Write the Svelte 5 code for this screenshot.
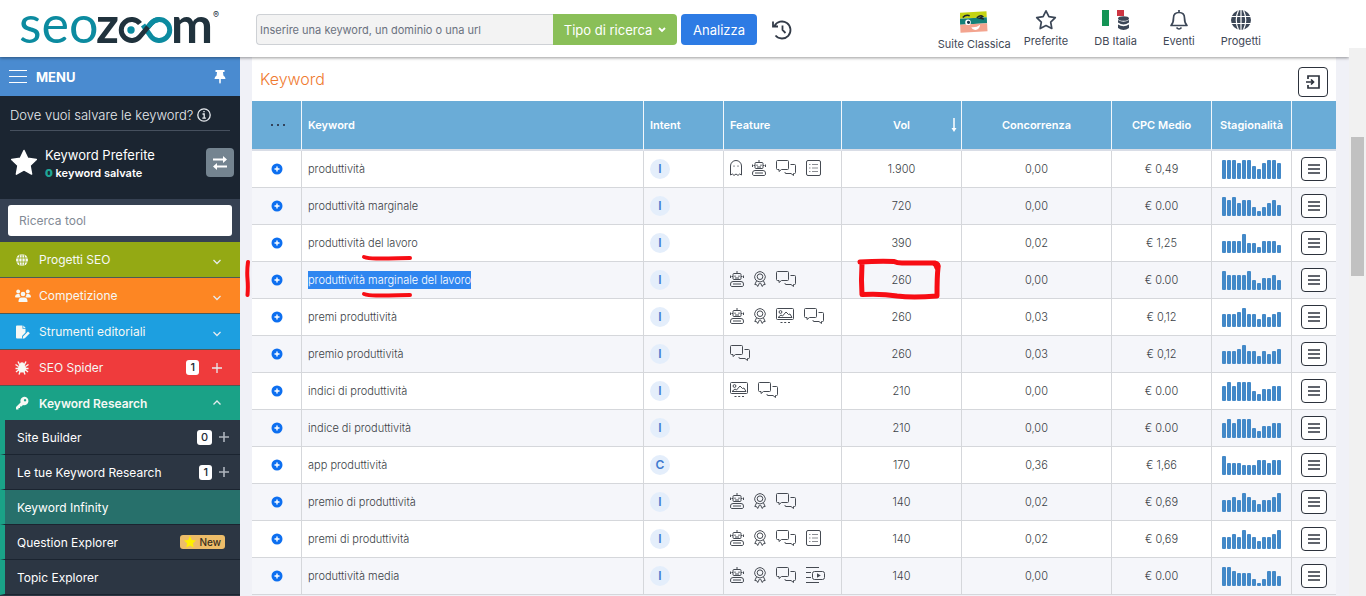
<script lang="ts">
  type Row = {
    keyword: string;
    intent: string;
    features: string[];
    vol: string;
    competition: string;
    cpc: string;
    trend: number[];
    mark?: string;
  };

  let query = $state('');
  let toolQuery = $state('');

  const sections = [
    { name: 'Progetti SEO', icon: 'globe', tone: 'olive' },
    { name: 'Competizione', icon: 'users', tone: 'orange' },
    { name: 'Strumenti editoriali', icon: 'edit', tone: 'blue' },
    { name: 'SEO Spider', icon: 'spider', tone: 'red', count: 1 },
    { name: 'Keyword Research', icon: 'key', tone: 'green', open: true }
  ];

  const tools = [
    { name: 'Site Builder', count: 0 },
    { name: 'Le tue Keyword Research', count: 1 },
    { name: 'Keyword Infinity', active: true },
    { name: 'Question Explorer', isNew: true },
    { name: 'Topic Explorer' }
  ];

  const premi = [13, 13, 13, 15, 19, 13, 13, 8, 13, 10, 13, 15];
  const indici = [15, 19, 15, 19, 19, 19, 10, 7, 12, 12, 15, 15];
  const premioDi = [12, 12, 15, 12, 19, 15, 12, 8, 12, 12, 15, 19];

  const rows: Row[] = [
    { keyword: 'produttività', intent: 'I', features: ['ghost', 'robot', 'chat', 'list'], vol: '1.900', competition: '0,00', cpc: '€ 0,49', trend: [19, 19, 19, 16, 19, 19, 13, 10, 16, 19, 19, 16] },
    { keyword: 'produttività marginale', intent: 'I', features: [], vol: '720', competition: '0,00', cpc: '€ 0.00', trend: [19, 16, 19, 13, 16, 16, 9, 5, 9, 13, 16, 11] },
    { keyword: 'produttività del lavoro', intent: 'I', features: [], vol: '390', competition: '0,02', cpc: '€ 1,25', trend: [12, 12, 12, 12, 19, 10, 10, 6, 12, 12, 12, 8], mark: 'line' },
    { keyword: 'produttività marginale del lavoro', intent: 'I', features: ['robot', 'award', 'chat'], vol: '260', competition: '0,00', cpc: '€ 0.00', trend: [19, 15, 15, 15, 15, 19, 10, 7, 12, 12, 15, 10], mark: 'full' },
    { keyword: 'premi produttività', intent: 'I', features: ['robot', 'award', 'image', 'chat'], vol: '260', competition: '0,03', cpc: '€ 0,12', trend: premi },
    { keyword: 'premio produttività', intent: 'I', features: ['chat'], vol: '260', competition: '0,03', cpc: '€ 0,12', trend: premi },
    { keyword: 'indici di produttività', intent: 'I', features: ['image', 'chat'], vol: '210', competition: '0,00', cpc: '€ 0.00', trend: indici },
    { keyword: 'indice di produttività', intent: 'I', features: [], vol: '210', competition: '0,00', cpc: '€ 0.00', trend: indici },
    { keyword: 'app produttività', intent: 'C', features: [], vol: '170', competition: '0,36', cpc: '€ 1,66', trend: [19, 12, 12, 12, 10, 10, 10, 15, 15, 12, 15, 15] },
    { keyword: 'premio di produttività', intent: 'I', features: ['robot', 'award', 'chat'], vol: '140', competition: '0,02', cpc: '€ 0,69', trend: premioDi },
    { keyword: 'premi di produttività', intent: 'I', features: ['robot', 'award', 'chat', 'list'], vol: '140', competition: '0,02', cpc: '€ 0,69', trend: premioDi },
    { keyword: 'produttività media', intent: 'I', features: ['robot', 'award', 'chat', 'video'], vol: '140', competition: '0,00', cpc: '€ 0.00', trend: [19, 19, 15, 13, 13, 13, 7, 3, 7, 15, 15, 10] }
  ];
</script>

{#snippet feature(name: string)}
  {#if name === 'ghost'}
    <svg class="feature" width="12" height="16" viewBox="0 0 12 16">
      <path d="M.5 15V6a5.500 5.500 0 0 1 11 0v9l-1.800-1L8 15.400l-2-1.400-2 1.400L2.300 14z" />
      <path d="M4 5.500v1.200M8 5.500v1.200" />
    </svg>
  {:else if name === 'robot'}
    <svg class="feature" width="14" height="16" viewBox="0 0 14 16">
      <path d="M7 0v2.500M4 2.500h6q1 0 1 1v4q0 1-1 1H4q-1 0-1-1v-4q0-1 1-1zM.5 4.500v2.500M13.500 4.500v2.500M1.500 5.500H3M11 5.500h1.500M5 4.500v1.500M9 4.500v1.500M5 7h4" />
      <path d="M3 10.500h8q2.500 0 2.500 2.500 0 2.500-1 2.500h-11q-1 0-1-2.500 0-2.500 2.500-2.500zM3 13h8" />
    </svg>
  {:else if name === 'award'}
    <svg class="feature" width="12" height="16" viewBox="0 0 12 16">
      <path d="M6 .6l1.800.5 1.800 1 1 1.700.8 1.900-.6 1.900-1 1.800-1.900 1L6 11l-2-.6-1.900-1L1 7.600.6 5.700l.7-1.900 1-1.700 1.800-1z" />
      <circle cx="6" cy="5.700" r="2.800" />
      <path d="M2.500 10L.8 13.500l1.900.2 1 1.800L5.500 12M9.500 10l1.700 3.500-1.900.2-1 1.800L6.500 12" />
    </svg>
  {:else if name === 'chat'}
    <svg class="feature" width="20" height="16" viewBox="0 0 20 16">
      <path d="M1.500.5h10q1 0 1 1v7q0 1-1 1h-6l-2.500 2v-2H1.500q-1 0-1-1v-7q0-1 1-1z" />
      <path d="M14.500 4.500h4q1 0 1 1v7q0 1-1 1h-1v2l-2.500-2H10q-1 0-1-1V12" />
    </svg>
  {:else if name === 'list'}
    <svg class="feature" width="15" height="16" viewBox="0 0 15 16">
      <rect x=".5" y=".5" width="14" height="15" rx="1.500" />
      <path class="faint" d="M3 4.500h1.500M6 4.500h6M3 8h1.500M6 8h6M3 11.500h1.500M6 11.500h6" />
    </svg>
  {:else if name === 'image'}
    <svg class="feature" width="18" height="16" viewBox="0 0 18 16">
      <rect x=".5" y=".5" width="17" height="11" rx="1" />
      <circle cx="4.500" cy="4" r="1.400" />
      <path d="M2 9.500l3-2.500 1.500 1L10 4l2.500 2.500L14 6l2 3.500zM4.500 14.500h2M8.200 14.500h2M12 14.500h2" />
    </svg>
  {:else}
    <svg class="feature" width="19" height="16" viewBox="0 0 19 16">
      <path d="M0 .5h13M0 5.500h5M0 10.500h5M0 15.500h13" />
      <rect x="6.500" y="4.500" width="12" height="8" rx="2" />
      <path class="solid" d="M11 6.300v4.400l3.800-2.200z" />
    </svg>
  {/if}
{/snippet}

{#snippet sectionIcon(name: string)}
  {#if name === 'globe'}
    <svg width="16" height="14" viewBox="0 0 16 14">
      <circle cx="7" cy="7" r="6" fill="currentColor" />
      <path class="cut" d="M1 5h12M1 9h12M7 1v12M5 1.200q-2.500 5.800 0 11.600M9 1.200q2.500 5.800 0 11.600" />
    </svg>
  {:else if name === 'users'}
    <svg width="16" height="14" viewBox="0 0 16 14" fill="currentColor">
      <circle cx="3.200" cy="2.500" r="1.900" /><circle cx="12.800" cy="2.500" r="1.900" /><circle cx="8" cy="5" r="2.300" />
      <path d="M0 7.500Q.3 5 2.500 5h2q0 1.500 1 2.700L4.500 8.500H.5zM16 7.500Q15.700 5 13.500 5h-2q0 1.500-1 2.700l1 .8h4zM3.500 13Q3.300 8.500 6.500 8.500h3q3.200 0 3 4.500z" />
    </svg>
  {:else if name === 'edit'}
    <svg width="16" height="14" viewBox="0 0 16 14" fill="currentColor">
      <path d="M1 1.500Q1 .5 2 .5h5.500v3.300h3v3.700L7 11v2.500H2q-1 0-1-1zM8.300.5l2.400 2.600H8.300z" />
      <path d="M8 11.500l5-5 1.800 1.800-5 5-2.200.5z" />
    </svg>
  {:else if name === 'spider'}
    <svg width="16" height="14" viewBox="0 0 16 14">
      <path d="M3 .5l2 4M11 .5l-2 4M.5 3.500l3 2M13.500 3.500l-3 2M.5 7.500h13M1 11l3-2.500M13 11l-3-2.500M4 13.500l1.500-4M10 13.500l-1.500-4" stroke="currentColor" stroke-width="1.400" fill="none" />
      <circle cx="7" cy="7.500" r="4" fill="currentColor" /><circle cx="7" cy="3.500" r="2.200" fill="currentColor" />
    </svg>
  {:else}
    <svg width="16" height="14" viewBox="0 0 16 14">
      <path fill="currentColor" fill-rule="evenodd" d="M9 .8a4.200 4.200 0 1 1-1 8.200L6.500 10.500H5v1.500H3.500v1.500H1V11l4.600-4.600A4.200 4.200 0 0 1 9 .8zM10 3a1.200 1.200 0 1 0 .1 0z" />
    </svg>
  {/if}
{/snippet}

<div class="page">
  <div class="app">
    <header class="topbar">
      <a class="logo" href="#home" aria-label="SEOZoom">
        <svg width="202" height="57" viewBox="0 0 202 57">
          <text class="logo-teal" x="-1" y="43">seo</text>
          <text class="logo-dark" x="76" y="43">z</text>
          <path class="ring teal" d="M123 25L131 36.500A10.500 10.500 0 1 0 131 23.500" />
          <path class="ring dark" d="M120 23.500A10.500 10.500 0 1 0 120 36.500L131 23.500" />
          <path class="ring teal" d="M128 27L131 23.500Q134 20 139 19.500" />
          <circle cx="111" cy="30" r="3.700" fill="#0c8ba0" />
          <text class="logo-dark" x="151" y="43">m</text>
          <text class="logo-reg" x="193" y="18">®</text>
        </svg>
      </a>

      <form class="search" onsubmit={(e) => e.preventDefault()}>
        <input type="text" aria-label="Keyword, dominio o url" placeholder="Inserire una keyword, un dominio o una url" bind:value={query} />
        <button type="button" class="type-btn">
          Tipo di ricerca
          <svg width="8" height="6" viewBox="0 0 8 6"><path d="M1 1l3 3 3-3" /></svg>
        </button>
        <button type="submit" class="go-btn">Analizza</button>
        <button type="button" class="history" aria-label="Cronologia">
          <svg width="22" height="22" viewBox="0 0 22 22">
            <path d="M3.500 7A8.500 8.500 0 1 1 4.500 16.500M2 2.500V7.500h5M11.500 6.500V11l3 3" />
          </svg>
        </button>
      </form>

      <nav class="topnav">
        <a class="suite" href="#suite">
          <svg width="28" height="28" viewBox="0 -5 28 28">
            <g transform="rotate(-3 14 11)">
              <path fill="#c4d313" d="M0 1h27v6H0z" /><path fill="#138078" d="M0 7h27v6H0z" /><path fill="#f3a48f" d="M0 13h27v8H0z" />
              <path d="M3 6q3-3 7-1.500M17 7q4-3 6-1l-3 1.500 4 1" fill="none" stroke="#1b2430" stroke-width="1.500" />
              <circle cx="8" cy="11" r="2.800" fill="#fff" /><circle cx="8.500" cy="11" r="1.600" fill="#13334a" />
              <path d="M11 16q5 1 9-2-1 5-5 5-3 0-4-3z" fill="#fff" />
            </g>
          </svg>
          Suite Classica
        </a>
        <a class="fav" href="#preferite">
          <svg width="22" height="22" viewBox="0 0 22 22">
            <path class="line" d="M11 1.800l2.900 5.900 6.400.9-4.600 4.500 1.100 6.400L11 16.500l-5.800 3 1.100-6.400L1.700 8.600l6.400-.9z" />
          </svg>
          Preferite
        </a>
        <a class="db" href="#db">
          <svg width="28" height="22" viewBox="0 0 28 22">
            <path fill="#149455" d="M0 1h7v16H0z" /><path fill="#fff" d="M7 1h8v16H7z" /><path fill="#cd3542" d="M15 1h7v16h-7z" />
            <path fill="#fff" d="M15 7h13v15H15z" />
            <ellipse cx="21.500" cy="9.500" rx="5.500" ry="2.300" fill="#3c4757" />
            <path fill="#3c4757" d="M16 11q5.500 3.500 11 0v2.500q-5.500 4-11 0zM16 15.500q5.500 3.500 11 0V19q-5.500 4-11 0z" />
          </svg>
          DB Italia
        </a>
        <a class="events" href="#eventi">
          <svg width="20" height="22" viewBox="0 0 20 22">
            <path class="line" d="M10 1v2M2 16.500q2.500-2.500 2.500-7.500 0-5.500 5.500-5.500T15.500 9q0 5 2.500 7.500zM7.500 18.500q2.500 3 5 0" />
          </svg>
          Eventi
        </a>
        <a class="projects" href="#progetti">
          <svg width="22" height="22" viewBox="0 0 22 22">
            <circle cx="11" cy="11" r="10" fill="#3c4757" />
            <path d="M1 7.500h20M1 14.500h20M11 1v20M8.500 1.200q-4.500 9.800 0 19.600M13.500 1.200q4.500 9.800 0 19.600" fill="none" stroke="#fff" stroke-width="1.200" />
          </svg>
          Progetti
        </a>
      </nav>
    </header>

    <div class="body">
      <aside class="sidebar">
        <div class="menu-head">
          <button type="button" aria-label="Apri menu">
            <svg width="18" height="14" viewBox="0 0 18 14"><path d="M0 .5h18M0 6.500h18M0 12.500h18" stroke="#fff" stroke-width="1" /></svg>
          </button>
          <strong>MENU</strong>
          <button type="button" class="pin" aria-label="Blocca menu">
            <svg width="12" height="14" viewBox="0 0 12 14" fill="#fff"><path d="M1.500 0h9v2H9l.4 3.500Q11.500 6.500 11.500 9H6.800v3.500L6 14l-.8-1.500V9H.5q0-2.500 2.100-3.500L3 2H1.500z" /></svg>
          </button>
        </div>

        <div class="save">
          <p class="save-title">
            Dove vuoi salvare le keyword?
            <svg width="14" height="14" viewBox="0 0 14 14"><circle cx="7" cy="7" r="6.200" /><path d="M5.500 6h1.700v4M5.300 10.200h3.600M6.300 3.700h1.400" /></svg>
          </p>
          <div class="save-list">
            <svg width="28" height="28" viewBox="0 0 28 28"><path d="M14 1.500l3.700 7.800 8.600 1.200-6.300 6 1.600 8.600-7.600-4.200-7.600 4.200L8 16.500l-6.300-6 8.600-1.200z" fill="#fff" stroke="#fff" stroke-width="1.500" stroke-linejoin="round" /></svg>
            <div class="save-text">
              <span>Keyword Preferite</span>
              <strong><b>0</b> keyword salvate</strong>
            </div>
            <button type="button" aria-label="Cambia lista">
              <svg width="16" height="16" viewBox="0 0 16 16"><path d="M1 4.500h11M15 11.500H4" stroke="#fff" stroke-width="2" /><path d="M11 1l4 3.500L11 8zM5 8l-4 3.500L5 15z" fill="#fff" /></svg>
            </button>
          </div>
        </div>

        <div class="tool-search">
          <input type="text" aria-label="Ricerca tool" placeholder="Ricerca tool" bind:value={toolQuery} />
        </div>

        <nav class="sections">
          {#each sections as s}
            <a class="section {s.tone}" class:open={s.open} href="#section">
              {@render sectionIcon(s.icon)}
              <span class="grow">{s.name}</span>
              {#if s.count !== undefined}
                <span class="count">{s.count}</span>
                <svg class="sign" width="12" height="12" viewBox="0 0 12 12"><path d="M6 1v10M1 6h10" /></svg>
              {:else if s.open}
                <svg class="sign" width="12" height="12" viewBox="0 0 12 12"><path d="M2.500 7.500L6 4l3.500 3.500" /></svg>
              {:else}
                <svg class="sign" width="12" height="12" viewBox="0 0 12 12"><path d="M2.500 6L6 9.500 9.500 6" /></svg>
              {/if}
            </a>
          {/each}
        </nav>

        <nav class="tools">
          {#each tools as t}
            <a class="tool" class:active={t.active} href="#tool">
              <span class="grow">{t.name}</span>
              {#if t.count !== undefined}
                <span class="count">{t.count}</span>
                <svg class="sign plus" width="12" height="12" viewBox="0 0 12 12"><path d="M6 1v10M1 6h10" /></svg>
              {/if}
              {#if t.isNew}
                <span class="new">
                  <svg width="12" height="12" viewBox="0 0 12 12"><path fill="#fff000" d="M6 0l1.800 3.900 4.200.5-3.100 2.900.8 4.200L6 9.400l-3.700 2.100.8-4.200L0 4.400l4.200-.5z" /></svg>
                  New
                </span>
              {/if}
            </a>
          {/each}
        </nav>
      </aside>

      <main class="main">
        <section class="card">
          <div class="card-head">
            <h2>Keyword</h2>
            <button type="button" aria-label="Esporta">
              <svg width="16" height="16" viewBox="0 0 16 16"><path d="M3 5V2h11v12H3v-3M1 8h7M6 5.500L8.500 8 6 10.500" /></svg>
            </button>
          </div>

          <table>
            <colgroup>
              <col class="w-add" /><col /><col class="w-intent" /><col class="w-feature" /><col class="w-vol" />
              <col class="w-comp" /><col class="w-cpc" /><col class="w-trend" /><col class="w-menu" />
            </colgroup>
            <thead>
              <tr>
                <th class="dots">
                  <svg width="16" height="4" viewBox="0 0 16 4"><circle cx="3" cy="2" r="1" /><circle cx="9" cy="2" r="1" /><circle cx="15" cy="2" r="1" /></svg>
                </th>
                <th class="left">Keyword</th>
                <th class="left">Intent</th>
                <th class="left">Feature</th>
                <th class="sorted">
                  Vol
                  <svg width="8" height="16" viewBox="0 0 8 16"><path d="M4 1v12" stroke="#fff" stroke-width="1.500" /><path d="M1.500 11h5L4 15z" fill="#fff" /></svg>
                </th>
                <th>Concorrenza</th>
                <th>CPC Medio</th>
                <th>Stagionalità</th>
                <th></th>
              </tr>
            </thead>
            <tbody>
              {#each rows as row}
                <tr>
                  <td>
                    <button type="button" class="add" aria-label="Aggiungi">
                      <svg width="12" height="12" viewBox="0 0 12 12"><circle cx="6" cy="6" r="5.500" fill="#0d6ff0" /><path d="M6 3.500v5M3.500 6h5" stroke="#fff" stroke-width="1.400" /></svg>
                    </button>
                    {#if row.mark === 'full'}
                      <svg class="mark mark-bar" width="6" height="40" viewBox="0 0 6 40"><path d="M3 3Q1.800 12 2.500 20T2.500 36" /></svg>
                    {/if}
                  </td>
                  <td class="left">
                    <span class:selected={row.mark === 'full'}>{row.keyword}</span>
                    {#if row.mark}
                      <svg class="mark mark-line" width="56" height="8" viewBox="0 0 56 8"><path d="M4 3q4 1.500 12 1.500T50 4" /></svg>
                    {/if}
                  </td>
                  <td class="left"><span class="intent">{row.intent}</span></td>
                  <td class="left">
                    <div class="features">
                      {#each row.features as f}{@render feature(f)}{/each}
                    </div>
                  </td>
                  <td>
                    {row.vol}
                    {#if row.mark === 'full'}
                      <svg class="mark mark-box" width="86" height="44" viewBox="0 0 86 44"><path d="M4 4q18-1 34-.5 3 1.500 8 1.500h33q4 .5 3 5-1 8-1 28-25 2-40 0-15-2.500-35-1.500Q5 22 6 6M77 5q3 1 4 5" /></svg>
                    {/if}
                  </td>
                  <td>{row.competition}</td>
                  <td>{row.cpc}</td>
                  <td>
                    <div class="bars">
                      {#each row.trend as h}<i style="height: {h}px"></i>{/each}
                    </div>
                  </td>
                  <td>
                    <button type="button" class="row-menu" aria-label="Azioni">
                      <svg width="12" height="10" viewBox="0 0 12 10"><path d="M0 1h12M0 5h12M0 9h12" /></svg>
                    </button>
                  </td>
                </tr>
              {/each}
            </tbody>
          </table>
        </section>
      </main>
    </div>
  </div>
  <div class="scroll"><div class="thumb"></div></div>
</div>

<style>
  :global(body) {
    background: #fff;
    font-family: Inter, "Liberation Sans", sans-serif;
    font-size: 11px;
    color: #3b3f46;
  }

  * {
    box-sizing: border-box;
  }

  svg {
    display: block;
    flex-shrink: 0;
  }

  a {
    color: inherit;
    text-decoration: none;
  }

  button {
    display: flex;
    align-items: center;
    justify-content: center;
    padding: 0;
    border: 0;
    background: none;
    font-family: inherit;
    cursor: pointer;
  }

  input {
    font-family: inherit;
    outline: 0;
  }

  .page {
    display: flex;
    height: 100vh;
    overflow: hidden;
  }

  .app {
    display: flex;
    flex-direction: column;
    flex: 1;
    min-width: 0;
  }

  .scroll {
    width: 17px;
    margin-top: 48px;
    padding: 89px 2px 0;
    background: #f1f1f1;
  }

  .thumb {
    height: 139px;
    background: #c1c1c1;
  }

  /* top bar */
  .topbar {
    display: flex;
    align-items: center;
    flex-shrink: 0;
    height: 57px;
    padding-right: 88px;
    background: #fff;
    box-shadow: 0 1px 3px rgba(0, 0, 0, 0.4);
    clip-path: inset(0 0 -6px 0);
    position: relative;
    z-index: 2;
  }

  .logo {
    width: 256px;
    padding-left: 20px;
  }

  .logo svg {
    overflow: visible;
  }

  .logo-teal,
  .logo-dark {
    font-family: Lato, sans-serif;
  }

  .logo-teal {
    fill: #0c8ba0;
    font-size: 52px;
  }

  .logo-dark {
    fill: #20323d;
    font-size: 50px;
    font-weight: 700;
  }

  .logo-reg {
    fill: #20323d;
    font-size: 9px;
  }

  .ring {
    fill: none;
    stroke-width: 5;
  }

  .ring.teal {
    stroke: #0c8ba0;
  }

  .ring.dark {
    stroke: #20323d;
  }

  .search {
    display: flex;
    height: 31px;
    margin-bottom: -2px;
  }

  .search input {
    width: 297px;
    padding: 0 3px;
    border: 1px solid #ced1d5;
    border-right: 0;
    border-radius: 4px 0 0 4px;
    background: #f3f3f3;
    font-size: 11px;
  }

  .search input::placeholder {
    color: #6b7280;
    opacity: 1;
  }

  .type-btn,
  .go-btn {
    color: #fff;
    font-size: 13px;
    font-weight: 400;
  }

  .type-btn {
    gap: 6px;
    width: 124px;
    border-radius: 0 4px 4px 0;
    background: #8abf58;
  }

  .type-btn svg,
  .history svg {
    fill: none;
    stroke: #fff;
    stroke-width: 1.8;
  }

  .go-btn {
    width: 76px;
    margin-left: 4px;
    border-radius: 4px;
    background: #2d7be4;
  }

  .history {
    margin-left: 14px;
  }

  .history svg {
    stroke: #333b48;
  }

  .topnav {
    display: flex;
    align-items: center;
    margin-left: auto;
    color: #3f4856;
  }

  .topnav a {
    display: flex;
    flex-direction: column;
    align-items: center;
    gap: 2px;
    line-height: 16px;
    white-space: nowrap;
  }

  .topnav .fav {
    margin-left: 13px;
  }

  .topnav .db,
  .topnav .events,
  .topnav .projects {
    margin-left: 26px;
  }

  .line {
    fill: none;
    stroke: #3c4757;
    stroke-width: 1.7;
    stroke-linejoin: round;
  }

  .body {
    display: flex;
    flex: 1;
    min-height: 0;
  }

  /* sidebar */
  .sidebar {
    width: 240px;
    flex-shrink: 0;
    overflow: hidden;
    background: #2c3643;
    color: #fff;
    font-size: 12px;
  }

  .menu-head {
    display: flex;
    align-items: center;
    gap: 9px;
    height: 39px;
    padding: 0 14px 0 9px;
    background: #4a8bd0;
  }

  .menu-head strong {
    font-size: 13px;
    font-weight: 700;
  }

  .pin {
    margin-left: auto;
  }

  .save {
    height: 103px;
    padding: 8px 6px 0 10px;
    background: #1b2531;
  }

  .save-title {
    display: flex;
    align-items: center;
    gap: 4px;
    height: 27px;
    margin: 0 4px 0 0;
    padding-bottom: 4px;
    border-bottom: 1px solid #46505e;
    color: #e8ebef;
    font-size: 13px;
    font-weight: 300;
  }

  .save-title svg {
    fill: none;
    stroke: #e8ebef;
    stroke-width: 1.3;
  }

  .save-list {
    display: flex;
    align-items: center;
    gap: 7px;
    margin-top: 12px;
  }

  .save-text {
    flex: 1;
    padding-top: 3px;
    line-height: 18px;
  }

  .save-text span {
    display: block;
    font-size: 13px;
  }

  .save-text strong {
    display: block;
    font-size: 11px;
    font-weight: 600;
  }

  .save-text b {
    color: #1fa596;
  }

  .save-list button {
    width: 28px;
    height: 29px;
    border-radius: 4px;
    background: #748490;
  }

  .tool-search {
    padding: 6px 8px;
    background: #364152;
  }

  .tool-search input {
    display: block;
    width: 100%;
    height: 31px;
    padding: 0 11px;
    border: 0;
    border-radius: 3px;
    background: #fff;
    font-size: 12px;
  }

  .tool-search input::placeholder {
    color: #828a95;
    opacity: 1;
  }

  .grow {
    flex: 1;
  }

  .section {
    display: flex;
    align-items: center;
    height: 36px;
    padding: 0 17px 0 15px;
    border-bottom: 1px solid #4d5a55;
    color: #f6f8f4;
  }

  .section .grow {
    padding-left: 8px;
  }

  .cut {
    fill: none;
    stroke: #94a914;
    stroke-width: 0.8;
  }

  .olive {
    background: #94a914;
  }

  .orange {
    background: #fd8623;
  }

  .blue {
    background: #1d9fe0;
  }

  .red {
    background: #ef3b3c;
  }

  .green {
    background: #1aa287;
  }

  .section.open {
    height: 34px;
    border-bottom: 0;
    font-weight: 600;
  }

  .count {
    padding: 0 4px;
    border-radius: 3px;
    background: #fff;
    color: #222a35;
    font-size: 11px;
    font-weight: 500;
    line-height: 15px;
  }

  .sign {
    margin-left: 12px;
    fill: none;
    stroke: #e6ebee;
    stroke-width: 1.3;
  }

  .sign.plus {
    margin-left: 6px;
    stroke: #aeb5bd;
    stroke-width: 1.6;
  }

  .tool {
    display: flex;
    align-items: center;
    height: 35px;
    padding: 0 10px 0 12px;
    border-left: 5px solid #1aa287;
    border-bottom: 1px solid #1b2430;
    background: #2c3643;
  }

  .tool.active {
    background: #27706b;
  }

  .new {
    display: flex;
    align-items: center;
    gap: 3px;
    margin-right: 5px;
    padding: 0 4px;
    border-radius: 3px;
    background: #edbd69;
    color: #3b3020;
    font-size: 10px;
    font-weight: 500;
    line-height: 14px;
  }

  /* results */
  .main {
    flex: 1;
    min-width: 0;
    padding: 0 13px 0 12px;
    overflow: hidden;
    background: #f0f1f7;
  }

  .card {
    background: #fff;
  }

  .card-head {
    display: flex;
    align-items: flex-end;
    justify-content: space-between;
    height: 44px;
    padding: 0 8px 4px;
  }

  h2 {
    margin: 0;
    color: #ef7a2f;
    font-size: 16px;
    font-weight: 300;
    line-height: 36px;
  }

  .card-head button {
    width: 30px;
    height: 30px;
    border: 1px solid #2c323c;
    border-radius: 4px;
    background: #fff;
  }

  .card-head button svg,
  .row-menu svg {
    fill: none;
    stroke: #2c323c;
    stroke-width: 1.7;
  }

  table {
    width: 100%;
    table-layout: fixed;
    border-collapse: separate;
    border-spacing: 0;
  }

  .w-add {
    width: 50px;
  }

  .w-intent,
  .w-trend {
    width: 80px;
  }

  .w-feature {
    width: 118px;
  }

  .w-vol {
    width: 120px;
  }

  .w-comp {
    width: 150px;
  }

  .w-cpc {
    width: 100px;
  }

  .w-menu {
    width: 44px;
  }

  th,
  td {
    position: relative;
    padding: 0;
    border-right: 1px solid #d5d7db;
    border-bottom: 1px solid #d5d7db;
    text-align: center;
    vertical-align: middle;
    white-space: nowrap;
  }

  th {
    height: 50px;
    border-right-color: #f2f7fb;
    border-bottom: 2px solid #d9dde6;
    background: #6aacd7;
    color: #fff;
    font-weight: 600;
  }

  th:last-child,
  td:last-child {
    border-right: 0;
  }

  td {
    height: 37px;
    font-weight: 300;
  }

  .left {
    padding-left: 6px;
    text-align: left;
  }

  tbody tr:nth-child(even) {
    background: #f5f6fa;
  }

  .dots svg {
    margin: 0 auto;
    fill: #223;
  }

  .sorted svg {
    position: absolute;
    right: 3px;
    top: 16px;
  }

  .add {
    margin: 0 auto;
  }

  .selected {
    padding: 2px 0;
    background: #2f86f0;
    color: #fff;
  }

  .intent {
    display: block;
    width: 20px;
    border-radius: 10px;
    background: #e4eefb;
    color: #3f7bd0;
    font-size: 12px;
    font-weight: 600;
    line-height: 20px;
    text-align: center;
  }

  .features {
    display: flex;
    gap: 10px;
    padding-bottom: 2px;
  }

  .feature {
    fill: none;
    stroke: #454a52;
    stroke-width: 1;
  }

  .faint {
    stroke: #8a8d92;
  }

  .solid {
    fill: #454a52;
    stroke: none;
  }

  .bars {
    display: flex;
    align-items: flex-end;
    gap: 1px;
    height: 19px;
    padding-left: 10px;
  }

  .bars i {
    width: 4px;
    border-radius: 1px;
    background: #4389c8;
  }

  .row-menu {
    width: 26px;
    height: 24px;
    margin: 0 auto;
    border: 1px solid #2c323c;
    border-radius: 4px;
    background: #fff;
  }

  .row-menu svg {
    stroke-width: 1.3;
  }

  /* hand-drawn marks over the table */
  .mark {
    position: absolute;
    z-index: 1;
    fill: none;
    stroke: #f70d14;
    stroke-width: 5;
    stroke-linecap: round;
    stroke-linejoin: round;
    pointer-events: none;
  }

  .mark-bar {
    left: -7px;
    top: -3px;
    stroke-width: 4;
  }

  .mark-line {
    left: 58px;
    top: 29px;
    stroke-width: 4;
  }

  .mark-box {
    left: 14px;
    top: -4px;
  }
</style>
